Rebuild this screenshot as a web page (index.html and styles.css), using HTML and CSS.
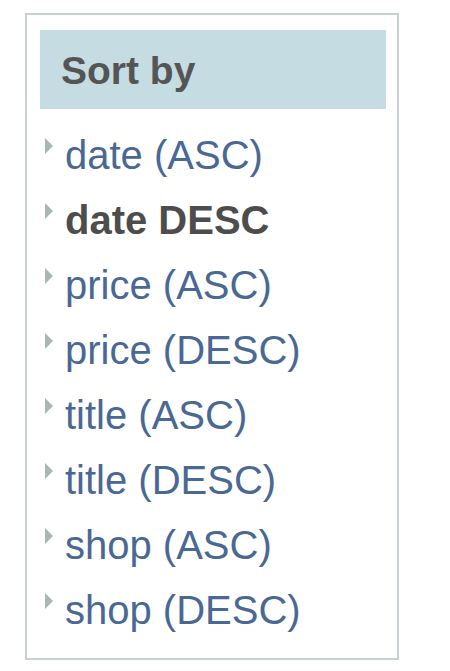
FILE: index.html
```html
<!DOCTYPE html>
<html lang="en">
<head>
    <meta charset="UTF-8">
    <meta name="viewport" content="width=device-width, initial-scale=1.0">
    <title>Sort by</title>
    <link rel="stylesheet" href="styles.css">
</head>
<body>
    <div class="sort-box">
        <h2 class="sort-title">Sort by</h2>
        <ul class="sort-list">
            <li><a href="#">date (ASC)</a></li>
            <li class="active">date DESC</li>
            <li><a href="#">price (ASC)</a></li>
            <li><a href="#">price (DESC)</a></li>
            <li><a href="#">title (ASC)</a></li>
            <li><a href="#">title (DESC)</a></li>
            <li><a href="#">shop (ASC)</a></li>
            <li><a href="#">shop (DESC)</a></li>
        </ul>
    </div>
</body>
</html>
```

FILE: styles.css
```css
body {
    font-family: "Liberation Sans", Arial, sans-serif;
    background-color: #fff;
    margin: 0;
    padding: 13px 0 0 25px;
}
.sort-box {
    width: 346px;
    border: 2px solid #c8d0d3;
    padding: 15px 11px 0 13px;
    height: 628px;
}
.sort-title {
    margin: 0;
    background-color: #c5dce3;
    color: #555;
    font-size: 39px;
    font-weight: bold;
    height: 77px;
    line-height: 77px;
    padding: 2px 0 0 21px;
}
.sort-list {
    list-style: none;
    margin: 14px 0 0;
    padding: 0;
}
.sort-list li {
    position: relative;
    font-size: 40px;
    line-height: 65px;
    padding-left: 25px;
    color: #4d4d4d;
}
.sort-list li::before {
    content: "";
    position: absolute;
    left: 5px;
    top: 15px;
    border-left: 8px solid #a9b6b3;
    border-top: 8.5px solid transparent;
    border-bottom: 8.5px solid transparent;
}
.sort-list li.active {
    font-weight: bold;
}
.sort-list a {
    color: #4a6894;
    text-decoration: none;
}
```
